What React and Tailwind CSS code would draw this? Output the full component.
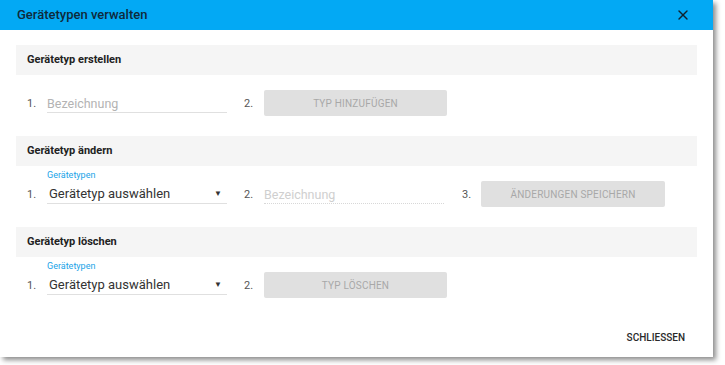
import React from 'react';
import { X } from 'lucide-react';

const font = { fontFamily: 'Roboto, "Liberation Sans", sans-serif' };

const SectionHeader = ({ title }) => (
  <div className="h-[30px] bg-[#f5f5f5] flex items-center px-[11px]">
    <h3 className="text-[11px] font-bold text-[#222]">{title}</h3>
  </div>
);

const Num = ({ n, width = 'w-[20px]' }) => (
  <span className={`${width} h-[26px] pt-[3px] flex items-center text-[11px] text-[#555] shrink-0`}>{n}.</span>
);

const TextField = ({ placeholder, disabled, width = 'w-[180px]' }) => (
  <div className={`${width} h-[23px] flex items-end pb-[2px] border-b ${disabled ? 'border-dotted border-[#d8d8d8]' : 'border-[#e0e0e0]'}`}>
    <span className={`text-[12.5px] leading-none ${disabled ? 'text-[#cfcfcf]' : 'text-[#b3b3b3]'}`}>{placeholder}</span>
  </div>
);

const SelectField = () => (
  <div className="relative w-[180px] h-[23px] flex items-end justify-between border-b border-[#e0e0e0] pl-[2px] pr-[5px] pb-[3px]">
    <span className="absolute bottom-full left-0 mb-[1px] text-[9px] leading-none text-[#1aa3e8]">Gerätetypen</span>
    <span className="text-[13px] leading-none text-[#333]">Gerätetyp auswählen</span>
    <span className="text-[8px] leading-none text-[#333] mb-[2px]">▼</span>
  </div>
);

const Button = ({ label, width = 'w-[183px]' }) => (
  <button className={`${width} h-[26px] bg-[#e0e0e0] rounded-[2px] text-[10px] text-[#a8a8a8] tracking-[0.2px] shrink-0`}>
    {label}
  </button>
);

const App = () => {
  return (
    <div className="w-[725px] h-[365px] bg-white" style={font}>
      <div className="w-[713px] h-[357px] bg-white flex flex-col shadow-[3px_3px_5px_rgba(0,0,0,0.45)]">
        <div className="h-[30px] bg-[#03a9f4] flex items-center justify-between pl-[17px] pr-[22px] shrink-0">
          <h2 className="text-[13px] font-medium text-[#0f2a3b]">Gerätetypen verwalten</h2>
          <X size={16} strokeWidth={2} className="text-[#10222d]" />
        </div>

        <div className="px-4 pt-[15px] flex flex-col">
          <SectionHeader title="Gerätetyp erstellen" />
          <div className="flex items-start mt-[15px] pl-[11px]">
            <Num n={1} />
            <TextField placeholder="Bezeichnung" />
            <div className="ml-[17px] flex items-start">
              <Num n={2} />
              <Button label="TYP HINZUFÜGEN" />
            </div>
          </div>

          <div className="mt-[20px]">
            <SectionHeader title="Gerätetyp ändern" />
          </div>
          <div className="flex items-start mt-[15px] pl-[11px]">
            <Num n={1} />
            <SelectField />
            <div className="ml-[17px] flex items-start">
              <Num n={2} />
              <TextField placeholder="Bezeichnung" disabled />
            </div>
            <div className="ml-[18px] flex items-start">
              <Num n={3} width="w-[19px]" />
              <Button label="ÄNDERUNGEN SPEICHERN" width="w-[184px]" />
            </div>
          </div>

          <div className="mt-[20px]">
            <SectionHeader title="Gerätetyp löschen" />
          </div>
          <div className="flex items-start mt-[15px] pl-[11px]">
            <Num n={1} />
            <SelectField />
            <div className="ml-[17px] flex items-start">
              <Num n={2} />
              <Button label="TYP LÖSCHEN" />
            </div>
          </div>
        </div>

        <div className="mt-auto flex justify-end pr-[20px] pb-[12px]">
          <button className="h-[16px] px-2 text-[10px] font-medium text-[#2a2a2a]">SCHLIESSEN</button>
        </div>
      </div>
    </div>
  );
};

export default App;
